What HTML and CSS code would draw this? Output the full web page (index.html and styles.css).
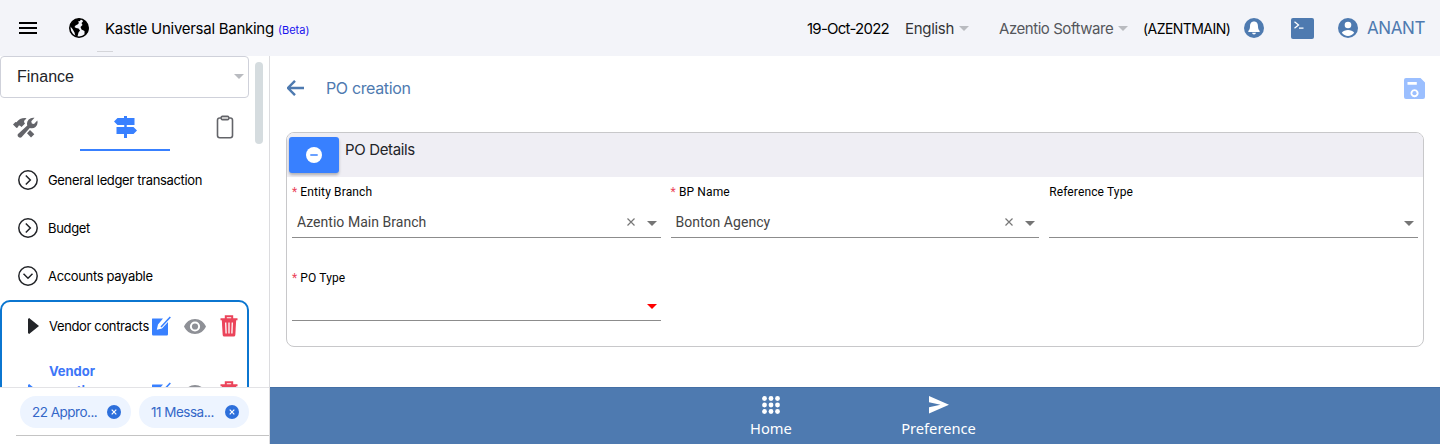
FILE: index.html
```html
<!DOCTYPE html>
<html lang="en">
<head>
<meta charset="utf-8">
<title>Kastle Universal Banking</title>
<link rel="stylesheet" href="styles.css">
</head>
<body>
<svg class="defs" width="0" height="0">
  <defs>
    <symbol id="edit" viewBox="0 0 20 20"><path fill="currentColor" d="M1.4 2.5H12L7 8.500 5.800 13.800 11 12.500 17 6V18.300Q17 19.500 15.800 19.500H2.200Q1 19.500 1 18.300V3Q1 2.500 1.400 2.500Z"/><path fill="none" stroke="currentColor" stroke-width="1.600" d="M10 11 19.300 1"/></symbol>
    <symbol id="eye" viewBox="0 0 22 15"><path fill="#8e9096" fill-rule="evenodd" d="M11 0C6 0 2 3 0 7.500 2 12 6 15 11 15S20 12 22 7.500C20 3 16 0 11 0Zm0 12.600A5.100 5.100 0 1 1 11 2.400a5.100 5.100 0 0 1 0 10.200Z"/><circle cx="11" cy="7.500" r="3.100" fill="#8e9096"/></symbol>
    <symbol id="trash" viewBox="0 0 18 22"><path fill="none" stroke="#eb445a" stroke-width="2" d="M.5 4.300H17.500M5.800 4V1.300h6.400V4"/><path fill="#eb445a" d="M1.800 5H16.200L15.300 20Q15.200 21.500 13.700 21.500H4.300Q2.800 21.500 2.700 20Z"/><path stroke="#fff" stroke-width="1.300" d="M5.700 7.500 6.100 18.500M9 7.500v11M12.300 7.500 11.900 18.500"/></symbol>
    <symbol id="close" viewBox="0 0 14 14"><circle cx="7" cy="7" r="7" fill="#2d6fdb"/><path d="m4.700 4.700 4.600 4.600m0-4.600-4.600 4.600" stroke="#fff" stroke-width="1.200"/></symbol>
    <symbol id="ring" viewBox="0 0 20 20"><circle cx="10" cy="10" r="9.200" fill="none" stroke="#222428" stroke-width="1.500"/><path d="m7.800 5.500 4.500 4.500-4.500 4.500" fill="none" stroke="#222428" stroke-width="1.500"/></symbol>
  </defs>
</svg>

<header class="topbar">
  <svg class="menu" viewBox="0 0 18 12"><path d="M0 1h18M0 6h18M0 11h18" stroke="#000" stroke-width="2"/></svg>
  <svg class="globe" viewBox="0 0 20 20"><circle cx="10" cy="10" r="9.200" fill="#f3f4f9" stroke="#000" stroke-width="1.600"/><path d="M2 6 5 2 10 .5 12 1 11 3 9 3.500 10 5 8.500 6.500 6.500 7.500 5.500 9 7 10 9.500 10.500 11 12.500 9.500 14.500 8.500 18.500 6.500 18.500 5.500 14.500 3.500 11 1 8ZM13 1 16.500 3.500 19 8 19.500 12 17 16 15.500 16.500 15.500 13 12.500 11.500 11.500 9 13.500 7 12.500 5 14 3.500Z"/></svg>
  <div class="brand"><span class="brand-name">Kastle Universal Banking</span><span class="beta">(Beta)</span></div>
  <span class="date">19-Oct-2022</span>
  <span class="language">English</span><i class="caret pale"></i>
  <span class="company">Azentio Software</span><i class="caret pale"></i>
  <span class="code">(AZENTMAIN)</span>
  <svg class="bell" viewBox="0 0 20 20"><circle cx="10" cy="10" r="10" fill="#4e7ab0"/><path fill="#fff" d="M10 3.600c-3 0-4 2.300-4 4.900 0 2.500-.8 3.300-1.500 4.200-.5.700-.2 1.300.5 1.300h10c.7 0 1-.6.500-1.300-.7-.9-1.500-1.700-1.500-4.200 0-2.600-1-4.900-4-4.900ZM8 14.800h4Q11.700 16.400 10 16.400T8 14.800Z"/></svg>
  <svg class="terminal" viewBox="0 0 23 21"><rect width="23" height="21" rx="2" fill="#4e7ab0"/><path d="M3.500 3.800 7.500 7 3.500 10.200M8 10.200h4.500" fill="none" stroke="#fff" stroke-width="1.300"/></svg>
  <svg class="person" viewBox="0 0 20 20"><circle cx="10" cy="10" r="10" fill="#4e7ab0"/><circle cx="10" cy="7" r="3.300" fill="#fff"/><path fill="#fff" d="M3.800 14.800C5 12.800 7.500 12 10 12s5 .8 6.200 2.800C14.800 16.800 12.500 18 10 18s-4.800-1.200-6.200-3.200Z"/></svg>
  <span class="user">ANANT</span>
  <i class="header-tick"></i>
</header>

<div class="body">
  <aside class="sidebar">
    <div class="side-scroll">
      <div class="side-content">
        <div class="module"><span>Finance</span><i class="caret pale"></i></div>
        <nav class="tabs">
          <span class="tab"><svg width="25" height="21" viewBox="0 0 25 21"><path fill="#636469" d="M0 7.500 2.500 5 3.500 5.300Q6.500.8 12.500 1L13.500 1.800Q11 2.800 11 5L12 6.500 8.500 10 6.800 8.500 5.500 8.800 5 10.200 3.500 11Z"/><path fill="#636469" d="M21.500.8 18.300 4.200 18.800 6.500 21 7 24.300 3.600Q25.300 7.500 22.500 10 20 12 16.800 10.900L8.500 20.300Q7 21.200 5.500 20 4 18.500 5 17L14.300 8.500Q13.300 5 15.700 2.500 18.200.2 21.500.8ZM17 13 21.300 17.200 18 20.500 14 16.200Z"/></svg></span>
          <span class="tab active"><svg width="23" height="22" viewBox="0 0 23 22"><path fill="#3880ff" d="M10 0h3v2h7.500v7H13v2h6.500L23 14.500 19.500 18H13v4h-3v-4H2.500v-7H10V9H3.500L0 5.500 3.500 2H10Z"/><path d="M2 10h19" stroke="#fff" stroke-width="1"/><path d="M11.500 8v4" stroke="#3880ff" stroke-width="2"/></svg></span>
          <span class="tab"><svg width="18" height="24" viewBox="0 0 18 24"><rect x="1.500" y="3" width="15" height="19.700" rx="2.200" fill="none" stroke="#636469" stroke-width="1.600"/><rect x="5.200" y="1.200" width="7.600" height="3.600" rx="1.200" fill="#ccc" stroke="#636469" stroke-width="1.400"/></svg></span>
        </nav>
        <div class="node"><svg class="ring"><use href="#ring"/></svg>General ledger transaction</div>
        <div class="node"><svg class="ring"><use href="#ring"/></svg>Budget</div>
        <div class="node"><svg class="ring open"><use href="#ring"/></svg>Accounts payable</div>
        <div class="tree">
          <div class="leaf"><i class="play"></i><span class="leaf-label">Vendor contracts</span><svg class="edit"><use href="#edit"/></svg><svg class="eye"><use href="#eye"/></svg><svg class="trash"><use href="#trash"/></svg></div>
          <div class="leaf selected"><i class="play"></i><span class="leaf-label">Vendor creation</span><svg class="edit"><use href="#edit"/></svg><svg class="eye"><use href="#eye"/></svg><svg class="trash"><use href="#trash"/></svg></div>
        </div>
      </div>
      <i class="scroll-thumb"></i>
    </div>
    <div class="side-foot">
      <div class="chips">
        <span class="chip wide">22 Appro...<svg><use href="#close"/></svg></span>
        <span class="chip">11 Messa...<svg><use href="#close"/></svg></span>
      </div>
    </div>
  </aside>

  <main class="main">
    <div class="page">
      <div class="titlebar">
        <svg class="back" viewBox="0 0 17 16"><path d="M8 .8.9 8 8 15.200M1 8h16" fill="none" stroke="#4e7ab0" stroke-width="2.400"/></svg>
        <h1>PO creation</h1>
        <svg class="save" viewBox="0 0 21 21"><path fill="#9bbfff" fill-rule="evenodd" d="M2 0h14.500L21 4.500V19q0 2-2 2H2q-2 0-2-2V2Q0 0 2 0ZM3.500 4v2.800h9.300V4Zm7 7.200a4 4 0 1 0 .1 0Z"/><circle cx="10.500" cy="15.200" r="2.100" fill="#9bbfff"/></svg>
      </div>
      <section class="card">
        <div class="card-head">
          <button class="collapse" aria-label="Collapse"><svg width="16" height="16" viewBox="0 0 16 16"><circle cx="8" cy="8" r="8" fill="#fff"/><path d="M4.300 8h7.400" stroke="#3880ff" stroke-width="1.500"/></svg></button>
          <h2>PO Details</h2>
        </div>
        <div class="fields">
          <div class="field"><label><b>*</b>Entity Branch</label><div class="input"><span>Azentio Main Branch</span><svg class="clear" viewBox="0 0 8 8"><path d="m.5.5 7 7m0-7-7 7"/></svg><i class="caret"></i></div></div>
          <div class="field"><label><b>*</b>BP Name</label><div class="input"><span>Bonton Agency</span><svg class="clear" viewBox="0 0 8 8"><path d="m.5.5 7 7m0-7-7 7"/></svg><i class="caret"></i></div></div>
          <div class="field"><label>Reference Type</label><div class="input"><span></span><i class="caret"></i></div></div>
          <div class="field second"><label><b>*</b>PO Type</label><div class="input"><span></span><i class="caret red"></i></div></div>
        </div>
      </section>
    </div>
    <footer class="actions">
      <div class="action home"><svg width="18" height="18" viewBox="0 0 18 18" fill="#fff"><circle cx="2.500" cy="2.500" r="2.400"/><circle cx="9" cy="2.500" r="2.400"/><circle cx="15.500" cy="2.500" r="2.400"/><circle cx="2.500" cy="9" r="2.400"/><circle cx="9" cy="9" r="2.400"/><circle cx="15.500" cy="9" r="2.400"/><circle cx="2.500" cy="15.500" r="2.400"/><circle cx="9" cy="15.500" r="2.400"/><circle cx="15.500" cy="15.500" r="2.400"/></svg><span>Home</span></div>
      <div class="action"><svg width="20" height="18" viewBox="0 0 20 18"><path fill="#fff" d="M0 0 20 8.700 0 17.500V11.200L11.500 8.700 0 6.300Z"/></svg><span>Preference</span></div>
    </footer>
  </main>
</div>
</body>
</html>
```
FILE: styles.css
```css
* { box-sizing: border-box; }
body { margin: 0; width: 1440px; height: 444px; overflow: hidden; background: #fff; color: #000; font-family: Inter, sans-serif; display: flex; flex-direction: column; }
svg, i { display: block; flex: none; }
span, h1, h2 { white-space: nowrap; }
.defs { position: absolute; }

.caret { width: 0; height: 0; border: 5px solid transparent; border-top-color: #757575; border-bottom: 0; }
.caret.pale { border-top-color: #b9bbc0; }
.caret.red { border-top-color: #f00; }

.topbar { position: relative; flex: none; height: 56px; padding-left: 19px; background: #f3f4f9; display: flex; align-items: center; font-size: 15px; letter-spacing: -.4px; }
.menu { width: 18px; height: 12px; margin-right: 32px; }
.globe { width: 20px; height: 20px; margin-right: 16px; }
.brand { width: 702px; display: flex; align-items: baseline; }
.brand-name { width: 173px; letter-spacing: -.27px; }
.beta { font-size: 11px; letter-spacing: 0; color: #1a12ee; }
.date { width: 98px; letter-spacing: -.75px; }
.language { width: 54px; color: #333438; letter-spacing: -.3px; }
.company { width: 119px; margin-left: 30px; color: #55575c; letter-spacing: -.45px; }
.code { width: 101px; margin-left: 15px; font-size: 14px; letter-spacing: -.55px; }
.bell { width: 20px; height: 20px; margin-right: 27px; }
.terminal { width: 23px; height: 21px; margin-right: 24px; }
.person { width: 20px; height: 20px; margin-right: 9px; }
.user { font-size: 17px; color: #4e7ab0; }
.header-tick { position: absolute; left: 97px; top: 51px; width: 16px; height: 1px; background: #d4d5d9; }

.body { flex: 1; min-height: 0; display: flex; }
.sidebar { width: 270px; border-right: 1px solid #dcdcdf; display: flex; flex-direction: column; }
.side-scroll { height: 331px; overflow: hidden; display: flex; gap: 6px; }
.side-content { width: 249px; flex: none; }
.module { height: 42px; padding: 0 4px 2px 16px; border: 1px solid #cfd1da; border-radius: 4px; display: flex; align-items: center; justify-content: space-between; font: 16px "Liberation Sans", sans-serif; color: #222428; }
.module span { padding-top: 2px; }
.scroll-thumb { width: 8px; height: 82px; margin-top: 6px; border-radius: 4px; background: #d5dcdf; }
.tabs { height: 58px; padding-top: 5px; margin: 0 -21px 0 -20px; display: flex; gap: 10px; }
.tab { width: 90px; height: 48px; display: flex; align-items: center; justify-content: center; }
.tab.active { border-bottom: 2px solid #3880ff; padding-top: 2px; }
.node { height: 48px; padding-left: 18px; display: flex; align-items: center; gap: 10px; font-size: 13px; letter-spacing: -.34px; }
.ring { width: 20px; height: 20px; }
.ring.open { transform: rotate(90deg); }
.tree { height: 160px; border: 2px solid #0b76d0; border-radius: 10px; }
.leaf { height: 48px; padding-left: 26px; display: flex; align-items: center; font-size: 13px; letter-spacing: -.36px; }
.play { width: 11px; height: 16px; margin-right: 10px; background: #222428; clip-path: polygon(0 6%, 10% 0, 100% 50%, 10% 100%, 0 94%); }
.leaf-label { width: 102px; line-height: 20px; }
.edit { width: 20px; height: 20px; color: #3880ff; margin-right: 13px; }
.eye { width: 22px; height: 15px; margin-right: 14px; }
.trash { width: 18px; height: 22px; }
.leaf.selected { height: 84px; color: #3d76f8; font-weight: 700; letter-spacing: -.05px; }
.selected .play { background: #3880ff; }
.selected .leaf-label { height: 62px; padding-right: 35px; white-space: normal; }
.side-foot { height: 57px; padding-top: 8px; border-top: 1px solid #e3e3e6; display: flex; flex-direction: column; }
.chips { padding-left: 20px; display: flex; gap: 8px; }
.chip { width: 110px; height: 32px; padding: 0 10px 0 12px; border-radius: 16px; background: #edf4ff; color: #3467c8; display: flex; align-items: center; justify-content: space-between; font-size: 13.500px; letter-spacing: -.5px; }
.chip.wide { width: 111px; }
.chip svg { width: 14px; height: 14px; }
.side-foot::after { content: ""; height: 1px; margin: 7px 0 0 16px; background: #c4c4c4; }

.main { flex: 1; display: flex; flex-direction: column; }
.page { flex: 1; padding: 20px 15px 0 16px; }
.titlebar { height: 24px; padding-left: 1px; display: flex; align-items: center; }
.back { width: 17px; height: 16px; margin-right: 22px; }
h1 { margin: 0; flex: 1; font-weight: 400; font-size: 16px; letter-spacing: -.35px; color: #4e7ab0; }
.save { width: 21px; height: 21px; }
.card { width: 1138px; height: 215px; margin-top: 32px; border: 1px solid #c8c8ca; border-radius: 8px; overflow: hidden; background: #fff; }
.card-head { height: 44px; background: #efeef4; padding: 4px 2px; display: flex; gap: 6px; }
.collapse { width: 50px; height: 36px; border: 0; border-radius: 3px; background: #3880ff; box-shadow: 0 2px 3px #0004; padding: 0; display: flex; align-items: center; justify-content: center; }
h2 { margin: 3px 0 0; font-weight: 400; font-size: 15px; line-height: 20px; letter-spacing: -.36px; color: #222428; }
.fields { padding: 0 5px; display: grid; grid-template-columns: repeat(3, 368.600px); column-gap: 10px; font-family: Roboto, sans-serif; }
.field { height: 84px; padding-top: 7px; }
.field label { display: flex; gap: 3px; height: 16px; font-size: 12px; line-height: 16px; letter-spacing: .13px; }
.field b { color: #eb445a; font-weight: 400; }
.input { height: 38px; padding: 0 4px 0 5px; border-bottom: 1px solid #8c8c8c; display: flex; align-items: center; }
.input span { flex: 1; font-size: 14px; letter-spacing: .03px; color: #444; margin-top: 7px; }
.clear { width: 8px; height: 8px; margin: 7px 12px 0 0; stroke: #777; stroke-width: 1.200; }
.input .caret { margin-top: 9px; }
.field.second { padding-top: 9px; }
.second .input { height: 35px; }
.second .input .caret { margin-top: 7px; }
.actions { height: 57px; background: #4e7ab0; border-top: 1px solid #446fa5; display: flex; padding-left: 480px; font-family: "Noto Sans", sans-serif; font-size: 14.700px; color: #fff; }
.action { width: 75px; padding-top: 8px; display: flex; flex-direction: column; align-items: center; gap: 4px; }
.action.home { width: 42px; margin-right: 109px; }
.action span { line-height: 20px; }
```
